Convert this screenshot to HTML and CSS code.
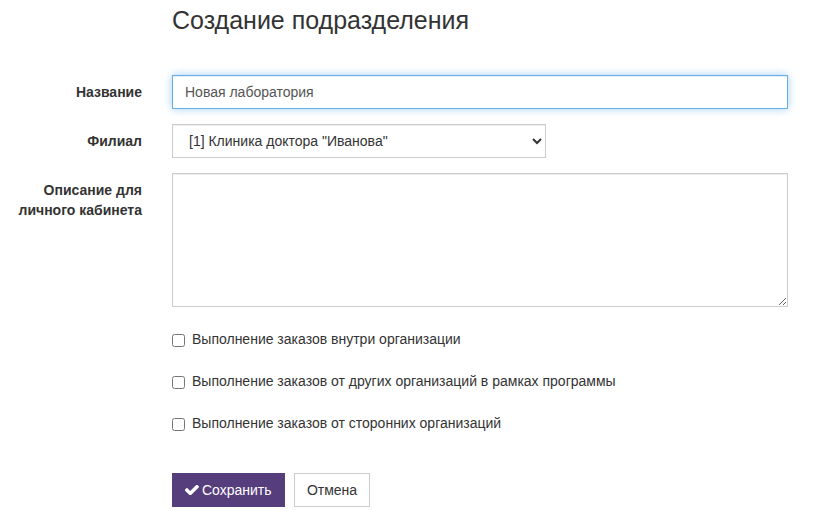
FILE: index.html
```html
<!DOCTYPE html>
<html lang="ru">
<head>
    <meta charset="UTF-8">
    <title>Создание подразделения</title>
    <link rel="stylesheet" href="styles.css">
</head>
<body>
    <div class="page">
        <div class="form-row title-row">
            <div></div>
            <h3 class="page-title">Создание подразделения</h3>
        </div>

        <form class="dept-form">
            <div class="form-row">
                <label class="form-label" for="name">Название</label>
                <div class="form-field">
                    <input type="text" id="name" class="form-control is-focused" value="Новая лаборатория">
                </div>
            </div>
            <div class="form-row">
                <label class="form-label" for="branch">Филиал</label>
                <div class="form-field">
                    <select id="branch" class="form-control select-short">
                        <option>[1] Клиника доктора "Иванова"</option>
                    </select>
                </div>
            </div>
            <div class="form-row">
                <label class="form-label" for="descr">Описание для личного кабинета</label>
                <div class="form-field">
                    <textarea id="descr" class="form-control textarea-tall"></textarea>
                </div>
            </div>

            <div class="form-row checks">
                <div></div>
                <div class="form-field">
                    <label class="check"><input type="checkbox"> Выполнение заказов внутри организации</label>
                    <label class="check"><input type="checkbox"> Выполнение заказов от других организаций в рамках программы</label>
                    <label class="check"><input type="checkbox"> Выполнение заказов от сторонних организаций</label>
                </div>
            </div>

            <div class="form-row">
                <div></div>
                <div class="form-field buttons">
                    <button type="button" class="btn btn-primary">
                        <svg class="icon-check" viewBox="140 400 1532 1024" width="14" height="10">
                            <path fill="#fff" d="M1671 566q0 40-28 68l-724 724-136 136q-28 28-68 28t-68-28l-136-136-362-362q-28-28-28-68t28-68l136-136q28-28 68-28t68 28l294 295 656-657q28-28 68-28t68 28l136 136q28 28 28 68z"/>
                        </svg>Сохранить
                    </button>
                    <button type="button" class="btn btn-default">Отмена</button>
                </div>
            </div>
        </form>
    </div>
</body>
</html>
```

FILE: styles.css
```css
body {
    margin: 0;
    font-family: "Liberation Sans", Arial, sans-serif;
    font-size: 14px;
    line-height: 20px;
    color: #333;
    background: #fff;
}
.page {
    padding-top: 7px;
}
.form-row {
    display: grid;
    grid-template-columns: 142px 616px;
    column-gap: 30px;
    margin-bottom: 15px;
}
.title-row {
    margin-bottom: 42px;
}
.page-title {
    margin: 0;
    font-size: 25px;
    font-weight: normal;
    line-height: 26px;
    color: #333;
}
.form-label {
    padding-top: 7px;
    text-align: right;
    font-weight: bold;
}
.form-control {
    display: block;
    box-sizing: border-box;
    width: 100%;
    height: 34px;
    padding: 6px 12px;
    font-family: inherit;
    font-size: 14px;
    line-height: 20px;
    color: #555;
    background: #fff;
    border: 1px solid #ccc;
    border-radius: 0;
    box-shadow: inset 0 1px 1px rgba(0, 0, 0, .075);
    margin: 0;
}
.is-focused {
    border-color: #66afe9;
    outline: 0;
    box-shadow: inset 0 1px 1px rgba(0, 0, 0, .075), 0 0 8px rgba(102, 175, 233, .6);
}
.select-short {
    width: 374px;
    color: #333;
}
.textarea-tall {
    height: 134px;
    resize: both;
}
.checks {
    margin-top: 22px;
    margin-bottom: 40px;
}
.checks .form-field {
    display: flex;
    flex-direction: column;
    gap: 22px;
}
.check {
    display: flex;
    align-items: center;
    gap: 7px;
    height: 20px;
}
.check input {
    width: 13px;
    height: 13px;
    margin: 2px 0 0 0;
}
.buttons {
    display: flex;
    gap: 9px;
}
.btn {
    box-sizing: border-box;
    height: 34px;
    padding: 6px 12px;
    font-family: inherit;
    font-size: 14px;
    line-height: 20px;
    border: 1px solid transparent;
    border-radius: 0;
    cursor: pointer;
    display: inline-flex;
    align-items: center;
}
.btn-primary {
    background: #563d7c;
    border-color: #563d7c;
    color: #fff;
    width: 113px;
}
.icon-check {
    margin-right: 3px;
}
.btn-default {
    background: #fff;
    border-color: #ccc;
    color: #333;
    width: 76px;
    justify-content: center;
}
```
